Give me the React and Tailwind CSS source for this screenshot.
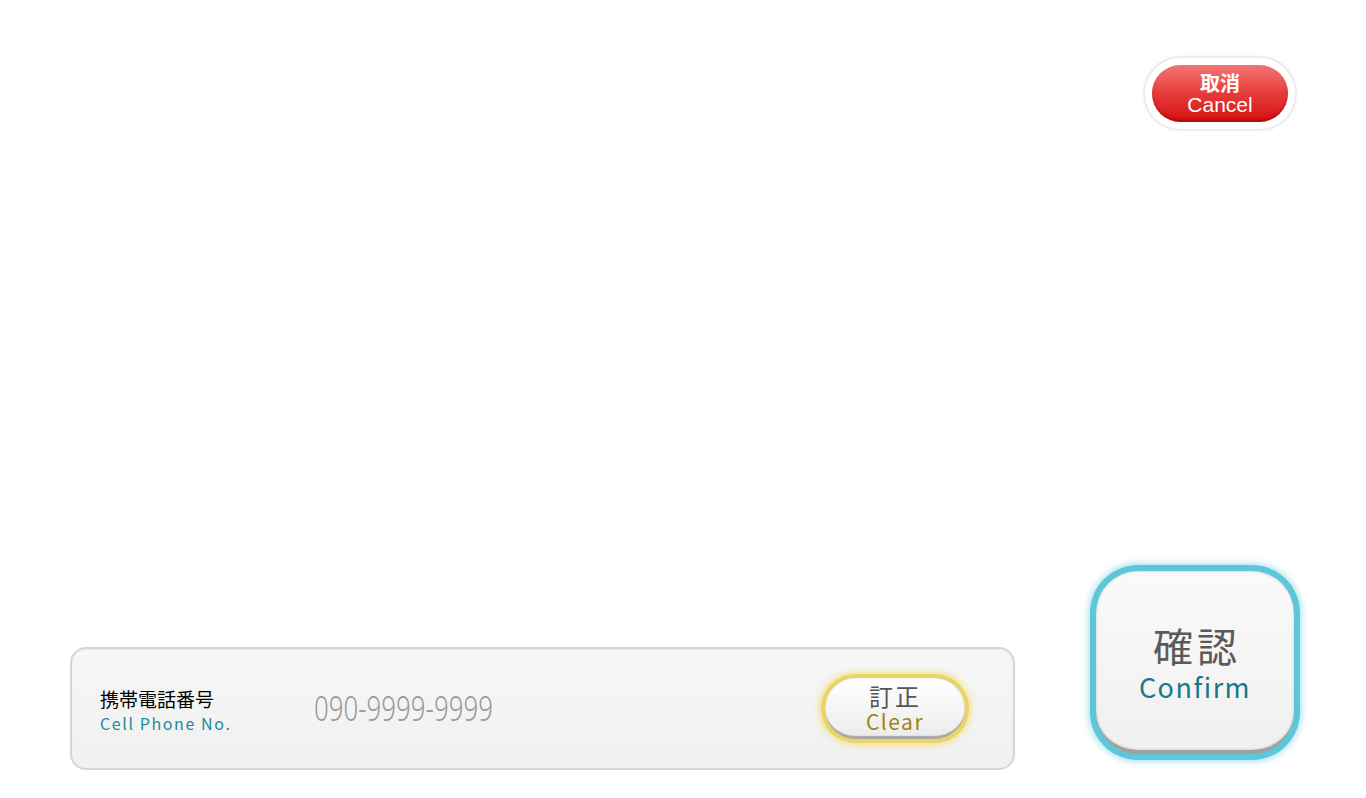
import React from "react";

const jp = { fontFamily: '"Noto Sans CJK JP", "Noto Sans", sans-serif' };

function CancelButton() {
  return (
    <div className="rounded-full bg-white p-[7px] shadow-[0_0_3px_rgba(0,0,0,0.18)] border border-[#ececec]">
      <button
        className="w-[136px] h-[57px] rounded-full flex flex-col items-center justify-center text-white bg-gradient-to-b from-[#f27474] via-[#e63a3a] to-[#d20a0a] shadow-[inset_0_-2px_3px_rgba(120,0,0,0.35)]"
        style={jp}
      >
        <span className="text-[20px] font-bold leading-[22px] mt-[1px]">取消</span>
        <span className="text-[21px] leading-[22px]" style={{ fontFamily: '"Liberation Sans", sans-serif' }}>Cancel</span>
      </button>
    </div>
  );
}

function ClearButton() {
  return (
    <div className="rounded-full p-[4px] bg-[#e9d467] shadow-[0_0_6px_2px_rgba(240,220,90,0.7)]">
      <button
        className="w-[140px] h-[61px] rounded-full flex flex-col items-center justify-center bg-gradient-to-b from-white to-[#ececec] border-b-[3px] border-[#a8a8a8] shadow-[inset_0_0_2px_rgba(0,0,0,0.15)]"
        style={jp}
      >
        <span className="text-[24px] leading-[26px] text-[#555] tracking-[2px] mt-[2px]">訂正</span>
        <span className="text-[21px] leading-[24px] text-[#9c8512] tracking-[1.5px]">Clear</span>
      </button>
    </div>
  );
}

function ConfirmButton() {
  return (
    <div className="rounded-[48px] p-[6px] bg-[#5ec6da] shadow-[0_0_6px_2px_rgba(110,205,225,0.55)]">
      <button
        className="w-[198px] h-[183px] rounded-[42px] flex flex-col items-center justify-center bg-gradient-to-b from-[#fafafa] to-[#f0f0f0] border-b-[4px] border-[#a0a0a0] shadow-[inset_0_0_3px_rgba(0,0,0,0.2)]"
        style={jp}
      >
        <span className="text-[40px] leading-[46px] text-[#5a5a5a] tracking-[4px] pl-[4px] mt-[4px]">確認</span>
        <span className="text-[27px] leading-[34px] text-[#17788a] tracking-[1.5px] mt-[2px]">Confirm</span>
      </button>
    </div>
  );
}

export default function App() {
  return (
    <div className="w-[1366px] h-[798px] bg-white flex flex-col justify-between overflow-hidden">
      <div className="flex justify-end pt-[57px] pr-[70px]">
        <CancelButton />
      </div>

      <div className="flex items-end justify-between pl-[70px] pr-[66px] pb-[28px]">
        <div className="w-[945px] h-[123px] rounded-[16px] border-2 border-[#d6d6d6] bg-gradient-to-b from-[#f7f7f7] to-[#f0f0f0] shadow-[inset_0_1px_2px_rgba(0,0,0,0.05)] flex items-center pl-[28px] pr-[44px]">
          <div className="flex flex-col w-[214px] pt-[4px]" style={jp}>
            <span className="text-[19px] leading-[24px] text-black">携帯電話番号</span>
            <span className="text-[16px] leading-[24px] text-[#1f8a9c] tracking-[1.6px]">Cell Phone No.</span>
          </div>
          <span
            className="text-[34px] text-[#9a9a9a] origin-left scale-x-[0.76] inline-block whitespace-nowrap"
            style={{ fontFamily: '"Noto Sans", sans-serif', fontWeight: 300 }}
          >
            090-9999-9999
          </span>
          <div className="ml-auto">
            <ClearButton />
          </div>
        </div>
        <div className="mb-[10px]">
          <ConfirmButton />
        </div>
      </div>
    </div>
  );
}
